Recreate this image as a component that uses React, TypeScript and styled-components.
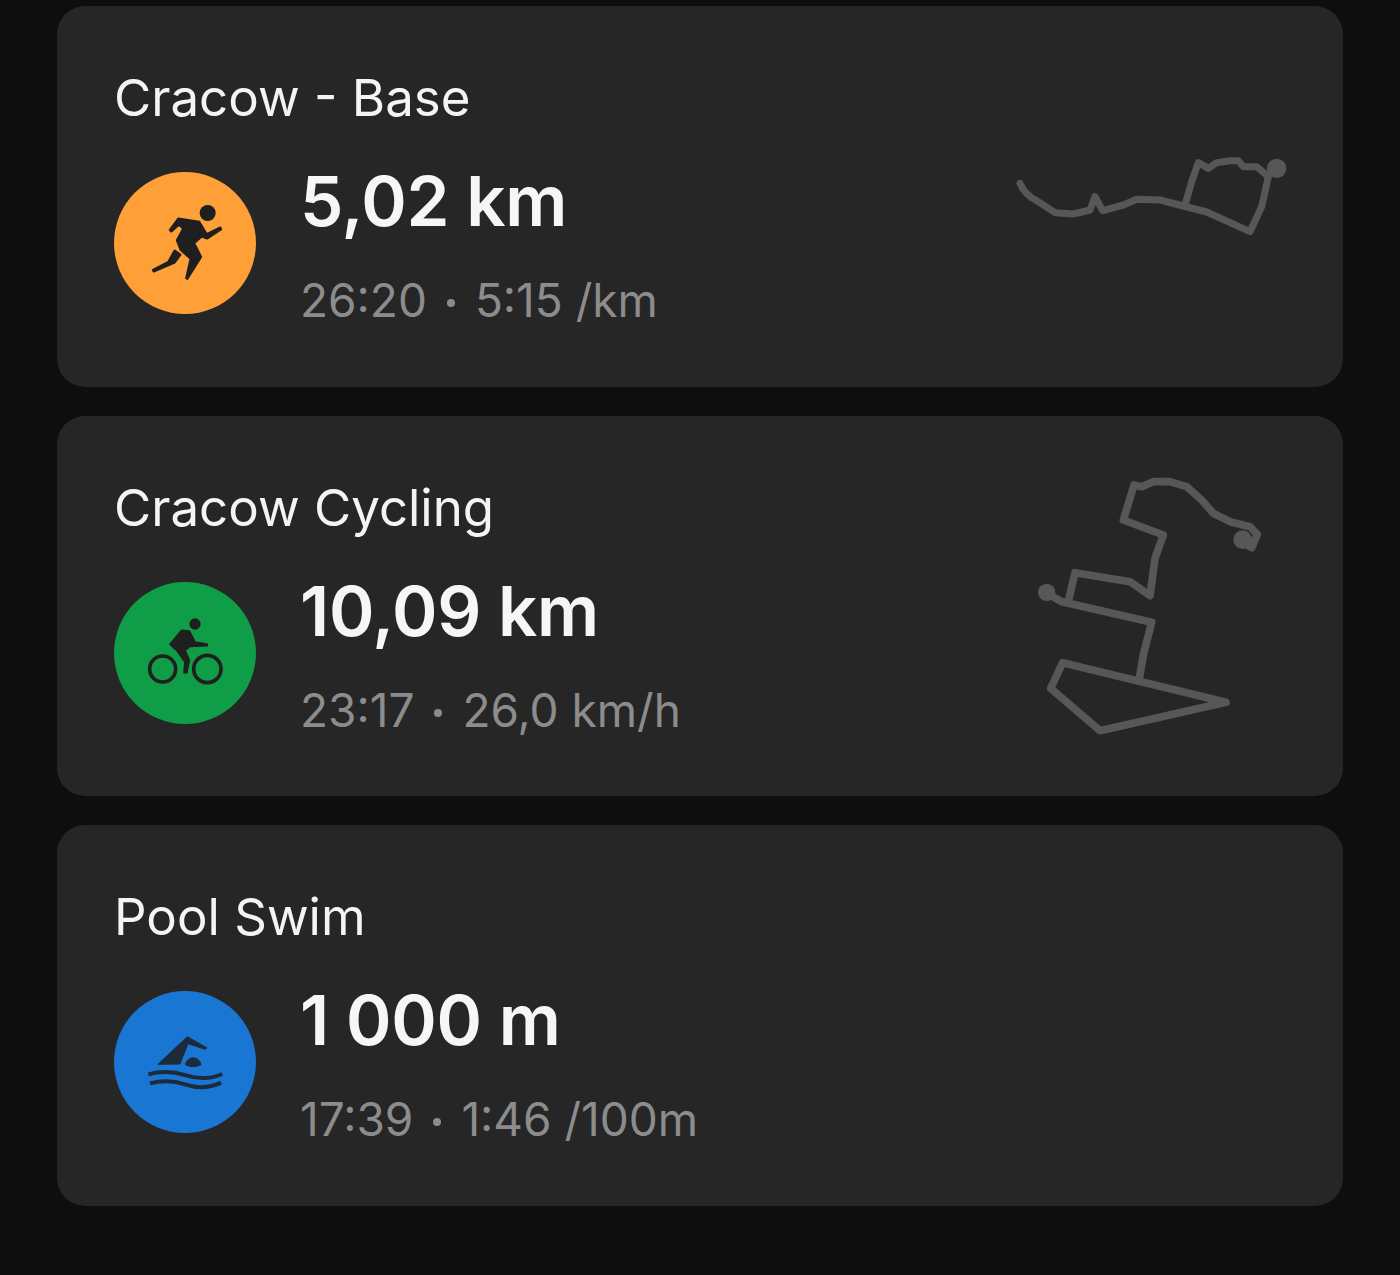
import React from "react";
import styled, { createGlobalStyle } from "styled-components";

const GlobalStyle = createGlobalStyle`
  html, body {
    margin: 0;
    padding: 0;
    background: #0e0e0e;
    font-family: Inter, "Noto Sans", "Liberation Sans", sans-serif;
  }
`;

const Page = styled.div`
  width: 1400px;
  height: 1275px;
  box-sizing: border-box;
  padding: 6px 57px 0;
  display: flex;
  flex-direction: column;
  gap: 29px;
  overflow: hidden;
`;

const Card = styled.section`
  height: 380.5px;
  flex: none;
  box-sizing: border-box;
  padding: 62px 0 0 57px;
  background: #262626;
  border-radius: 28px;
  display: grid;
  grid-template-columns: 1fr auto;
  grid-template-rows: 60px auto;
  row-gap: 44px;
`;

const Title = styled.h2`
  grid-column: 1;
  margin: 0;
  font-size: 51px;
  line-height: 60px;
  font-weight: 400;
  color: #f4f4f4;
`;

const Summary = styled.div`
  grid-column: 1;
  display: flex;
  gap: 44px;
`;

const Badge = styled.div<{ $color: string }>`
  width: 142px;
  height: 142px;
  border-radius: 50%;
  background: ${(props) => props.$color};
  flex: none;
`;

const BadgeIcon = styled.svg`
  display: block;
  width: 142px;
  height: 142px;
`;

const Stats = styled.div`
  display: flex;
  flex-direction: column;
  margin-top: -11px;
`;

const Distance = styled.div`
  font-size: 69px;
  line-height: 80px;
  font-weight: 600;
  letter-spacing: -0.3px;
  color: #f6f6f6;
`;

const Details = styled.div`
  margin-top: 29px;
  font-size: 46px;
  line-height: 60px;
  color: #8c8c8c;
`;

const Dot = styled.span`
  display: inline-block;
  width: 8px;
  height: 8px;
  margin: 0 20px;
  border-radius: 50%;
  background: #8c8c8c;
  vertical-align: 10px;
`;

const Route = styled.svg<{ $top: number; $right: number }>`
  grid-column: 2;
  grid-row: 1 / 3;
  margin: ${(props) => props.$top - 62}px ${(props) => props.$right}px 0 0;
  filter: blur(0.4px);
`;

const RunShape = styled.path`
  fill: #1f1f1f;
  stroke: #1f1f1f;
  stroke-width: 7;
  stroke-linejoin: round;
`;

const BikeShape = styled.path`
  fill: #1f1f1f;
  stroke: #1f1f1f;
  stroke-width: 5;
  stroke-linejoin: round;
`;

const SwimShape = styled.path`
  fill: #1d2a3a;
  stroke: #1d2a3a;
  stroke-width: 3;
  stroke-linejoin: round;
`;

const Wave = styled.path`
  fill: none;
  stroke: #1d2a3a;
  stroke-width: 12;
`;

const RunIcon = () => (
  <BadgeIcon viewBox="42 35 426 426">
    <circle cx="323" cy="158" r="24" fill="#1f1f1f" />
    <RunShape d="M210 209 L235 175 L298 185 L320 222 L361 202 L363 207 L322 234 L305 228 L282 248 L303 290 L262 355 L259 353 L272 295 L242 268 L231 240 L250 205 L237 192 L214 213 Z" />
    <RunShape d="M159 329 L205 305 L224 271 L241 283 L224 306 L161 333 Z" />
  </BadgeIcon>
);

const BikeIcon = () => (
  <BadgeIcon viewBox="42 35 426 426">
    <circle cx="285" cy="161" r="17" fill="#1f1f1f" />
    <circle cx="188" cy="296" r="39" fill="none" stroke="#1f1f1f" strokeWidth="11" />
    <circle cx="322" cy="296" r="41" fill="none" stroke="#1f1f1f" strokeWidth="11" />
    <BikeShape d="M210 222 L245 180 L268 182 L285 215 L321 221 L322 226 L270 228 L255 240 L268 270 L260 308 L252 307 L255 275 L230 240 Z" />
  </BadgeIcon>
);

const SwimIcon = () => (
  <BadgeIcon viewBox="42 35 426 426">
    <SwimShape d="M174 255 L262 172 L320 205 L316 210 L264 193 L240 254 Z" />
    <SwimShape d="M256 256 A24 26 0 0 1 303 256 Q280 268 256 256 Z" />
    <Wave d="M145 285 Q200 270 258 288 T367 284" />
    <Wave d="M150 312 Q205 298 258 316 T363 310" />
  </BadgeIcon>
);

const RouteLine = styled.path`
  fill: none;
  stroke: #575757;
  stroke-linejoin: round;
  stroke-linecap: round;
`;

const RouteDot = styled.circle`
  fill: #575757;
`;

export default function App() {
  return (
    <Page>
      <GlobalStyle />
      <Card>
        <Title>Cracow - Base</Title>
        <Summary>
          <Badge $color="#ff9f38">
            <RunIcon />
          </Badge>
          <Stats>
            <Distance>5,02 km</Distance>
            <Details>
              26:20<Dot />5:15 /km
            </Details>
          </Stats>
        </Summary>
        <Route $top={134} $right={43} width="300" height="110" viewBox="0 0 900 330">
          <RouteLine
            strokeWidth="21"
            d="M60 130 Q75 165 110 182 L165 218 L220 222 L270 210 L285 170 L308 212 L370 195 L410 178 L480 180 L550 198 L620 216 L750 275 L785 200 L805 110 L770 80 L730 80 L715 62 L690 62 L650 68 L625 85 L595 68 L575 125 L555 195"
          />
          <RouteDot cx="830" cy="85" r="29" />
        </Route>
      </Card>
      <Card>
        <Title>Cracow Cycling</Title>
        <Summary>
          <Badge $color="#0f9d47">
            <BikeIcon />
          </Badge>
          <Stats>
            <Distance>10,09 km</Distance>
            <Details>
              23:17<Dot />26,0 km/h
            </Details>
          </Stats>
        </Summary>
        <Route $top={49} $right={63} width="260" height="280" viewBox="0 0 780 840">
          <RouteLine
            strokeWidth="23"
            d="M80 385 L125 410 L395 472 L370 570 L358 640 M147 400 L165 323 L330 350 L390 392 L405 280 L430 210 L310 165 L342 60 L365 65 L400 50 L450 50 L500 65 L545 105 L580 145 L630 170 L690 185 L712 208 L695 248 L665 230"
          />
          <RouteLine strokeWidth="23" d="M128 593 L92 670 L240 797 L618 712 L128 593 Z" />
          <RouteDot cx="80" cy="382" r="26" />
          <RouteDot cx="668" cy="224" r="28" />
        </Route>
      </Card>
      <Card>
        <Title>Pool Swim</Title>
        <Summary>
          <Badge $color="#1976d2">
            <SwimIcon />
          </Badge>
          <Stats>
            <Distance>1 000 m</Distance>
            <Details>
              17:39<Dot />1:46 /100m
            </Details>
          </Stats>
        </Summary>
      </Card>
    </Page>
  );
}
